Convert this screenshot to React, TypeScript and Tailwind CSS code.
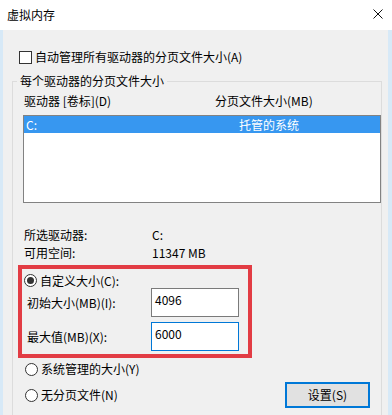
import React from "react";

function Radio({ checked = false }: { checked?: boolean }) {
  return (
    <span className="flex h-[13px] w-[13px] shrink-0 items-center justify-center rounded-full border border-[#333333] bg-white">
      {checked && <span className="h-[7px] w-[7px] rounded-full bg-[#333333]" />}
    </span>
  );
}

function SizeField({ label, value, focused = false }: { label: string; value: string; focused?: boolean }) {
  return (
    <div className="flex h-[29px] items-center pl-[5px]">
      <span className="w-[124px]">{label}</span>
      <div
        className={
          focused
            ? "h-[29px] w-[88px] border border-[#0078d7] bg-white pl-[3px] pt-[3px] leading-[16px]"
            : "h-[29px] w-[88px] border border-[#7a7a7a] bg-white pl-[3px] pt-[3px] leading-[16px]"
        }
      >
        {value}
      </div>
    </div>
  );
}

export default function App() {
  return (
    <div
      className="flex h-[415px] w-[392px] flex-col overflow-hidden bg-white text-[12px] leading-[16px] text-black"
      style={{ fontFamily: '"Noto Sans CJK SC", "Noto Sans", sans-serif' }}
    >
      {/* Title bar */}
      <div className="flex h-[30px] shrink-0 items-center justify-between bg-white pl-[7px] pr-[9px]">
        <span>虚拟内存</span>
        <svg width="10" height="10" viewBox="0 0 10 10" className="mt-[-2px]">
          <path d="M0.5 0.5L9.5 9.5M9.5 0.5L0.5 9.5" stroke="#111" strokeWidth="1" />
        </svg>
      </div>

      {/* Body */}
      <div className="flex-1 border-l-[3px] border-r-[4px] border-[#d7e9f7] bg-[#f0f0f0]">
        <div className="mt-[17px] flex h-[20px] items-center gap-[3px] pl-[16px]">
          <span className="h-[13px] w-[13px] border border-[#333333] bg-white" />
          <span>自动管理所有驱动器的分页文件大小(A)</span>
        </div>

        <fieldset className="ml-[9px] mt-[6px] h-[400px] w-[368px] border border-[#dcdcdc]">
          <legend className="ml-[4px] px-[3px] leading-[16px]">每个驱动器的分页文件大小</legend>

          <div className="mt-[4px] flex h-[16px] items-center pl-[11px]">
            <span className="w-[191px]">驱动器 [卷标](D)</span>
            <span>分页文件大小(MB)</span>
          </div>

          <div className="ml-[10px] mt-[6px] h-[88px] w-[358px] border border-[#828282] bg-white">
            <div className="flex h-[17px] items-center bg-[#3797f0] text-white">
              <span className="w-[215px] pl-[2px]">C:</span>
              <span>托管的系统</span>
            </div>
          </div>

          <div className="mt-[23px] flex h-[18px] items-center pl-[11px]">
            <span className="w-[128px]">所选驱动器:</span>
            <span>C:</span>
          </div>
          <div className="flex h-[18px] items-center pl-[11px]">
            <span className="w-[128px]">可用空间:</span>
            <span>11347 MB</span>
          </div>

          <div className="ml-[5px] mt-[3px] h-[93px] w-[234px] border-4 border-[#e23c44] pt-[4px]">
            <div className="flex h-[15px] items-center gap-[3px] pl-[2px]">
              <Radio checked />
              <span>自定义大小(C):</span>
            </div>
            <SizeField label="初始大小(MB)(I):" value="4096" />
            <div className="mt-[5px]">
              <SizeField label="最大值(MB)(X):" value="6000" focused />
            </div>
          </div>

          <div className="mt-[2px] flex">
            <div className="w-[272px]">
              <div className="flex h-[18px] items-center gap-[3px] pl-[12px]">
                <Radio />
                <span>系统管理的大小(Y)</span>
              </div>
              <div className="mt-[8px] flex h-[18px] items-center gap-[3px] pl-[12px]">
                <Radio />
                <span>无分页文件(N)</span>
              </div>
            </div>
            <button className="mt-[22px] flex h-[26px] w-[85px] items-center justify-center border-2 border-[#0078d7] bg-[#e1e1e1]">
              设置(S)
            </button>
          </div>
        </fieldset>
      </div>
    </div>
  );
}
